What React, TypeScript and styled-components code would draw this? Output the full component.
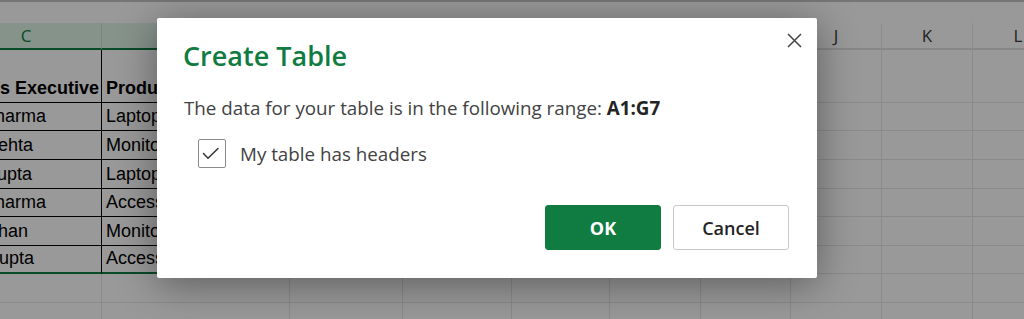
import React from "react";
import styled, { createGlobalStyle } from "styled-components";

const GlobalStyle = createGlobalStyle`
  html, body {
    margin: 0;
    padding: 0;
    width: 1024px;
    height: 319px;
    overflow: hidden;
    background: #ffffff;
  }
  * { box-sizing: border-box; }
`;

const Page = styled.div`
  position: relative;
  width: 1024px;
  height: 319px;
  overflow: hidden;
  background: #ffffff;
`;

/* ---------- spreadsheet behind the modal ---------- */

const Sheet = styled.div`
  display: flex;
  flex-direction: column;
  margin-left: -49px;
  width: 1112px;
`;

const TopStrip = styled.div`
  height: 23px;
  border-top: 2px solid #c4c4c4;
  background: #ffffff;
`;

const Row = styled.div<{ $h: number }>`
  display: flex;
  height: ${(p) => p.$h}px;
`;

const HeaderCell = styled.div<{ $w: number; $sel?: boolean }>`
  flex: none;
  width: ${(p) => p.$w}px;
  display: flex;
  align-items: center;
  justify-content: center;
  background: ${(p) => (p.$sel ? "#e0f5e8" : "#ffffff")};
  border-right: 1px solid ${(p) => (p.$sel ? "#c9e0d1" : "#ececec")};
  border-bottom: 2px solid ${(p) => (p.$sel ? "#107c41" : "#e2e2e2")};
  color: ${(p) => (p.$sel ? "#107c41" : "#3a3a3a")};
  font: 17px "Open Sans", "Noto Sans", sans-serif;
`;

const Cell = styled.div<{
  $w: number;
  $table?: boolean;
  $bold?: boolean;
  $right?: boolean;
  $last?: boolean;
  $pad?: number;
}>`
  flex: none;
  width: ${(p) => p.$w}px;
  display: flex;
  align-items: flex-end;
  justify-content: ${(p) => (p.$right ? "flex-end" : "flex-start")};
  overflow: hidden;
  white-space: nowrap;
  padding: 0 2px 3px ${(p) => p.$pad ?? 4}px;
  border-right: 1px solid ${(p) => (p.$table ? "#000000" : "#e6e6e6")};
  border-bottom: ${(p) =>
    p.$last ? "2px solid #107c41" : `1px solid ${p.$table ? "#000000" : "#e6e6e6"}`};
  color: #000000;
  font-family: "Liberation Sans", Arial, sans-serif;
  font-size: 18px;
  line-height: 21px;
  font-weight: ${(p) => (p.$bold ? 700 : 400)};
`;

/* modal backdrop dimming the grid */
const Backdrop = styled.div`
  position: absolute;
  top: 0;
  left: 0;
  width: 1024px;
  height: 319px;
  background: rgba(0, 0, 0, 0.4);
  display: flex;
  align-items: flex-start;
`;

/* ---------- dialog ---------- */

const Dialog = styled.div`
  margin: 18px 0 0 157px;
  width: 660px;
  height: 260px;
  background: #ffffff;
  border-radius: 2px;
  box-shadow: 0 6px 40px rgba(0, 0, 0, 0.4);
  padding: 14px 28px 28px 26px;
  display: flex;
  flex-direction: column;
  font-family: "Open Sans", "Noto Sans", sans-serif;
`;

const Header = styled.div`
  display: flex;
  justify-content: space-between;
  align-items: flex-start;
  margin-right: -16px;
`;

const Title = styled.h2`
  margin: 6px 0 0 0;
  font-size: 27px;
  line-height: 36px;
  font-weight: 600;
  color: #107c41;
`;

const CloseButton = styled.button`
  width: 21px;
  height: 21px;
  margin-top: -2px;
  padding: 0;
  border: none;
  background: transparent;
  display: flex;
  align-items: center;
  justify-content: center;
  cursor: pointer;
`;

const Message = styled.p`
  margin: 21px 0 0 1px;
  font-size: 18.8px;
  line-height: 26px;
  color: #424242;
`;

const Range = styled.strong`
  font-weight: 700;
  color: #242424;
`;

const CheckRow = styled.label`
  margin: 18px 0 0 15px;
  display: flex;
  align-items: center;
  gap: 14px;
  font-size: 18.8px;
  line-height: 26px;
  color: #424242;
`;

const Box = styled.span`
  flex: none;
  width: 28px;
  height: 29px;
  border: 1px solid #8a8a8a;
  border-radius: 2px;
  display: flex;
  align-items: flex-start;
  justify-content: flex-start;
`;

const Footer = styled.div`
  margin-top: auto;
  display: flex;
  justify-content: flex-end;
  gap: 12px;
`;

const Button = styled.button<{ $primary?: boolean }>`
  width: 116px;
  height: 45px;
  border-radius: 3px;
  border: 1px solid ${(p) => (p.$primary ? "#107c41" : "#c8c8c8")};
  background: ${(p) => (p.$primary ? "#107c41" : "#ffffff")};
  color: ${(p) => (p.$primary ? "#ffffff" : "#242424")};
  font-family: "Open Sans", "Noto Sans", sans-serif;
  font-size: 18px;
  font-weight: ${(p) => (p.$primary ? 700 : 600)};
  cursor: pointer;
`;

const COLS = [
  { key: "C", w: 151, sel: true, shown: true },
  { key: "D", w: 188, sel: true, shown: false },
  { key: "E", w: 113, sel: true, shown: false },
  { key: "F", w: 109, sel: true, shown: false },
  { key: "G", w: 98, sel: true, shown: false },
  { key: "H", w: 91, sel: false, shown: false },
  { key: "I", w: 90, sel: false, shown: false },
  { key: "J", w: 91, sel: false, shown: true },
  { key: "K", w: 91, sel: false, shown: true },
  { key: "L", w: 91, sel: false, shown: true },
];

const TABLE: { exec: string; product: string; h: number }[] = [
  { exec: "Sales Executive", product: "Product", h: 53 },
  { exec: "Raj Sharma", product: "Laptop", h: 28 },
  { exec: "Ria Mehta", product: "Monitor", h: 29 },
  { exec: "Raj Gupta", product: "Laptop", h: 29 },
  { exec: "Ria Sharma", product: "Accessories", h: 28 },
  { exec: "Adil Khan", product: "Monitor", h: 29 },
  { exec: "Om Gupta", product: "Accessories", h: 28 },
];

const EXTRA_ROWS = [29, 29];

export default function App() {
  return (
    <Page>
      <GlobalStyle />
      <Sheet>
        <TopStrip />
        <Row $h={27}>
          {COLS.map((c) => (
            <HeaderCell key={c.key} $w={c.w} $sel={c.sel}>
              {c.shown ? c.key : null}
            </HeaderCell>
          ))}
        </Row>
        {TABLE.map((r, ri) => {
          const isHead = ri === 0;
          const isLast = ri === TABLE.length - 1;
          return (
            <Row key={ri} $h={r.h}>
              {COLS.map((c, ci) => {
                const inTable = ci < 5;
                return (
                  <Cell
                    key={c.key}
                    $w={c.w}
                    $table={inTable}
                    $last={inTable && isLast}
                    $bold={isHead}
                    $right={isHead && ci === 0}
                    $pad={ci === 0 ? 0 : 4}
                  >
                    {ci === 0 ? <span>{r.exec}</span> : ci === 1 ? <span>{r.product}</span> : null}
                  </Cell>
                );
              })}
            </Row>
          );
        })}
        {EXTRA_ROWS.map((h, i) => (
          <Row key={`x${i}`} $h={h}>
            {COLS.map((c) => (
              <Cell key={c.key} $w={c.w} />
            ))}
          </Row>
        ))}
      </Sheet>

      <Backdrop>
        <Dialog role="dialog" aria-label="Create Table">
          <Header>
            <Title>Create Table</Title>
            <CloseButton aria-label="Close">
              <svg width="15" height="15" viewBox="0 0 15 15">
                <path d="M1 1 L14 14 M14 1 L1 14" stroke="#444444" strokeWidth="1.5" fill="none" />
              </svg>
            </CloseButton>
          </Header>
          <Message>
            The data for your table is in the following range: <Range>A1:G7</Range>
          </Message>
          <CheckRow>
            <Box>
              <svg width="26" height="27" viewBox="0 0 26 27">
                <path
                  d="M4.5 13.5 L9 18.2 L19 8.5"
                  stroke="#333333"
                  strokeWidth="1.5"
                  fill="none"
                  strokeLinecap="round"
                  strokeLinejoin="round"
                />
              </svg>
            </Box>
            My table has headers
          </CheckRow>
          <Footer>
            <Button $primary>OK</Button>
            <Button>Cancel</Button>
          </Footer>
        </Dialog>
      </Backdrop>
    </Page>
  );
}
